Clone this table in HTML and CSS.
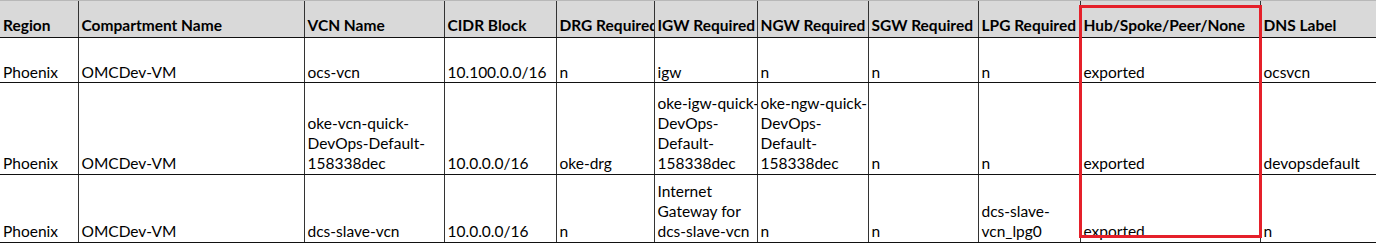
FILE: index.html
```html
<!DOCTYPE html>
<html>
<head>
<meta charset="utf-8">
<link rel="stylesheet" href="styles.css">
</head>
<body>
<div class="sheet">
  <table class="grid">
    <colgroup>
      <col class="c-region"><col class="c-comp"><col class="c-vcn"><col class="c-cidr"><col class="c-drg"><col class="c-igw"><col class="c-ngw"><col class="c-sgw"><col class="c-lpg"><col class="c-hub"><col class="c-dns">
    </colgroup>
    <thead>
      <tr class="head">
        <th>Region</th><th>Compartment Name</th><th>VCN Name</th><th>CIDR Block</th><th>DRG Required</th><th>IGW Required</th><th>NGW Required</th><th>SGW Required</th><th>LPG Required</th><th>Hub/Spoke/Peer/None</th><th>DNS Label</th>
      </tr>
    </thead>
    <tbody>
      <tr class="r1">
        <td>Phoenix</td><td>OMCDev-VM</td><td>ocs-vcn</td><td>10.100.0.0/16</td><td>n</td><td>igw</td><td>n</td><td>n</td><td>n</td><td>exported</td><td>ocsvcn</td>
      </tr>
      <tr class="r2">
        <td>Phoenix</td><td>OMCDev-VM</td><td>oke-vcn-quick-<br>DevOps-Default-<br>158338dec</td><td>10.0.0.0/16</td><td>oke-drg</td><td>oke-igw-quick-<br>DevOps-<br>Default-<br>158338dec</td><td>oke-ngw-quick-<br>DevOps-<br>Default-<br>158338dec</td><td>n</td><td>n</td><td>exported</td><td>devopsdefault</td>
      </tr>
      <tr class="r3">
        <td>Phoenix</td><td>OMCDev-VM</td><td>dcs-slave-vcn</td><td>10.0.0.0/16</td><td>n</td><td>Internet<br>Gateway for<br>dcs-slave-vcn</td><td>n</td><td>n</td><td>dcs-slave-<br>vcn_lpg0</td><td>exported</td><td>n</td>
      </tr>
      <tr class="r4">
        <td></td><td></td><td></td><td></td><td></td><td></td><td></td><td></td><td></td><td></td><td></td>
      </tr>
    </tbody>
  </table>
  <div class="highlight"></div>
</div>
</body>
</html>
```

FILE: styles.css
```css
html, body {
  margin: 0;
  padding: 0;
  background: #ffffff;
}

.sheet {
  position: relative;
  width: 1376px;
  height: 243px;
  overflow: hidden;
  font-family: Lato, "Open Sans", sans-serif;
  font-size: 15.5px;
  color: #000;
}

.grid {
  border-collapse: collapse;
  table-layout: fixed;
  width: 1440px;
}

.c-region { width: 78px; }
.c-comp { width: 226px; }
.c-vcn { width: 140px; }
.c-cidr { width: 112px; }
.c-drg { width: 98px; }
.c-igw { width: 103px; }
.c-ngw { width: 111px; }
.c-sgw { width: 110px; }
.c-lpg { width: 102px; }
.c-hub { width: 180px; }
.c-dns { width: 180px; }

.grid th,
.grid td {
  vertical-align: bottom;
  text-align: left;
  padding: 0 0 1px 3px;
  line-height: 20px;
  white-space: nowrap;
  overflow: hidden;
  border-left: 1px solid #333;
  border-bottom: 1px solid #111;
}

.grid th:first-child,
.grid td:first-child {
  border-left: none;
}

.head th {
  background: #d9d9d9;
  font-weight: 700;
  color: #000;
  height: 34px;
  border-top: 1px solid #b8b8b8;
  padding-bottom: 2px;
}

.r1 td { height: 44px; padding-bottom: 0; }
.r2 td { height: 90px; }
.r3 td { height: 66px; }
.r4 td { height: 10px; border-bottom: 1px solid #c8c8c8; border-left-color: #c8c8c8; }

.highlight {
  position: absolute;
  left: 1079px;
  top: 5px;
  width: 177px;
  height: 227px;
  border: 3px solid #e5202a;
}
```
